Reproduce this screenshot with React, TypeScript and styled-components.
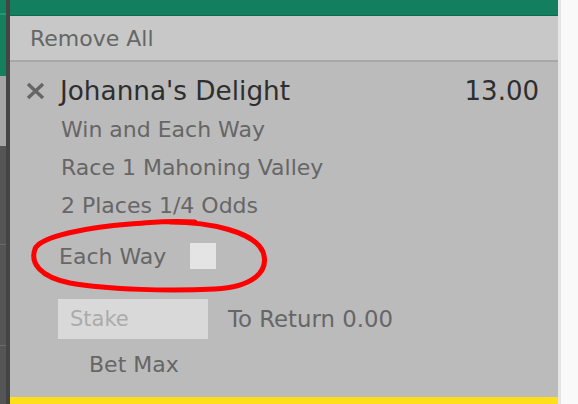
import React from "react";
import styled, { createGlobalStyle } from "styled-components";

const Global = createGlobalStyle`
  html, body { margin: 0; padding: 0; background: #f9f9f9; overflow: hidden; }
  #root { width: 578px; height: 404px; }
`;

const Page = styled.div`
  position: relative;
  display: flex;
  width: 578px;
  height: 404px;
  font-family: "DejaVu Sans", Verdana, sans-serif;
`;

const SideStrip = styled.div`
  width: 6px;
  display: flex;
  flex-direction: column;
`;

const SideBlock = styled.div<{ $h?: number; $bg: string; $top?: string }>`
  ${(p) => (p.$h ? `height: ${p.$h}px;` : "flex: 1;")}
  background: ${(p) => p.$bg};
  border-top: ${(p) => p.$top ?? "none"};
  box-sizing: border-box;
`;

const Divider = styled.div`
  width: 4px;
  background: #444444;
`;

const Panel = styled.div`
  width: 548px;
  display: flex;
  flex-direction: column;
  background: #bbbbbb;
`;

const GreenBar = styled.div`
  height: 15px;
  background: #137f5f;
  border-bottom: 1px solid #0f6b50;
`;

const RemoveBar = styled.div`
  height: 44px;
  display: flex;
  align-items: center;
  padding-left: 20px;
  background: #c8c8c8;
  border-bottom: 2px solid #a8a8a8;
  color: #666666;
  font-size: 22px;
`;

const Body = styled.div`
  flex: 1;
  display: flex;
  flex-direction: column;
  padding: 14px 19px 0 16px;
`;

const TitleRow = styled.div`
  display: flex;
  align-items: center;
  height: 30px;
`;

const CloseIcon = styled.svg`
  width: 19px;
  height: 18px;
  margin-right: 15px;
  flex: none;
`;

const Title = styled.div`
  flex: 1;
  font-size: 26.3px;
  line-height: 30px;
  color: #2e2e2e;
`;

const Odds = styled.div`
  font-size: 26px;
  line-height: 30px;
  color: #2e2e2e;
`;

const Details = styled.div`
  margin-top: 5px;
  padding-left: 35px;
  display: flex;
  flex-direction: column;
`;

const DetailLine = styled.div`
  font-size: 22px;
  line-height: 38px;
  color: #666666;
`;

const EachWayRow = styled.div`
  display: flex;
  align-items: center;
  margin-top: 18px;
  height: 26px;
  padding-left: 33px;
  font-size: 22px;
  color: #666666;
`;

const Checkbox = styled.span`
  width: 26px;
  height: 26px;
  margin-left: 24px;
  background: #e4e4e4;
`;

const StakeRow = styled.div`
  display: flex;
  align-items: center;
  margin-top: 30px;
  padding-left: 32px;
  gap: 20px;
`;

const StakeInput = styled.input`
  width: 150px;
  height: 40px;
  box-sizing: border-box;
  border: none;
  outline: none;
  padding: 0 12px;
  background: #d9d9d9;
  font-family: inherit;
  font-size: 21px;
  color: #666666;
  &::placeholder { color: #ababab; }
`;

const ReturnText = styled.span`
  font-size: 22.8px;
  color: #666666;
`;

const BetMax = styled.div`
  margin-top: 7px;
  padding-left: 63px;
  font-size: 22px;
  line-height: 38px;
  color: #666666;
`;

const Spacer = styled.div`
  flex: 1;
`;

const YellowBar = styled.div`
  height: 7px;
  margin: 0 -19px 0 -16px;
  background: #ffdf1b;
`;

const RightEdge = styled.div`
  width: 3px;
  background: #e5e5e5;
`;

const Annotation = styled.svg`
  position: absolute;
  left: 0;
  top: 0;
  width: 578px;
  height: 404px;
  pointer-events: none;
`;

export default function App() {
  return (
    <>
      <Global />
      <Page>
        <SideStrip>
          <SideBlock $h={13} $bg="#137f5f" />
          <SideBlock $h={63} $bg="#137f5f" $top="2px solid #1f9a72" />
          <SideBlock $h={70} $bg="#a6a6a6" />
          <SideBlock $h={98} $bg="#555555" />
          <SideBlock $h={101} $bg="#555555" $top="1px solid #6a6a6a" />
          <SideBlock $bg="#555555" $top="1px solid #6a6a6a" />
        </SideStrip>
        <Divider />
        <Panel>
          <GreenBar />
          <RemoveBar>Remove All</RemoveBar>
          <Body>
            <TitleRow>
              <CloseIcon viewBox="0 0 19 18">
                <path d="M2 2 L17 16 M17 2 L2 16" stroke="#666666" strokeWidth="3.4" />
              </CloseIcon>
              <Title>Johanna's Delight</Title>
              <Odds>13.00</Odds>
            </TitleRow>
            <Details>
              <DetailLine>Win and Each Way</DetailLine>
              <DetailLine>Race 1 Mahoning Valley</DetailLine>
              <DetailLine>2 Places 1/4 Odds</DetailLine>
            </Details>
            <EachWayRow>
              Each Way
              <Checkbox />
            </EachWayRow>
            <StakeRow>
              <StakeInput placeholder="Stake" readOnly />
              <ReturnText>To Return 0.00</ReturnText>
            </StakeRow>
            <BetMax>Bet Max</BetMax>
            <Spacer />
            <YellowBar />
          </Body>
        </Panel>
        <RightEdge />
        <Annotation viewBox="0 0 578 404">
          <path
            d="M 170 222 C 210 222, 255 232, 263 252 C 270 272, 252 287, 215 289 C 170 291, 110 290, 70 283 C 40 277, 30 263, 35 249 C 40 236, 90 227, 130 224 C 150 223, 165 220, 195 222"
            fill="none"
            stroke="#ff0000"
            strokeWidth="5"
            strokeLinecap="round"
          />
        </Annotation>
      </Page>
    </>
  );
}
